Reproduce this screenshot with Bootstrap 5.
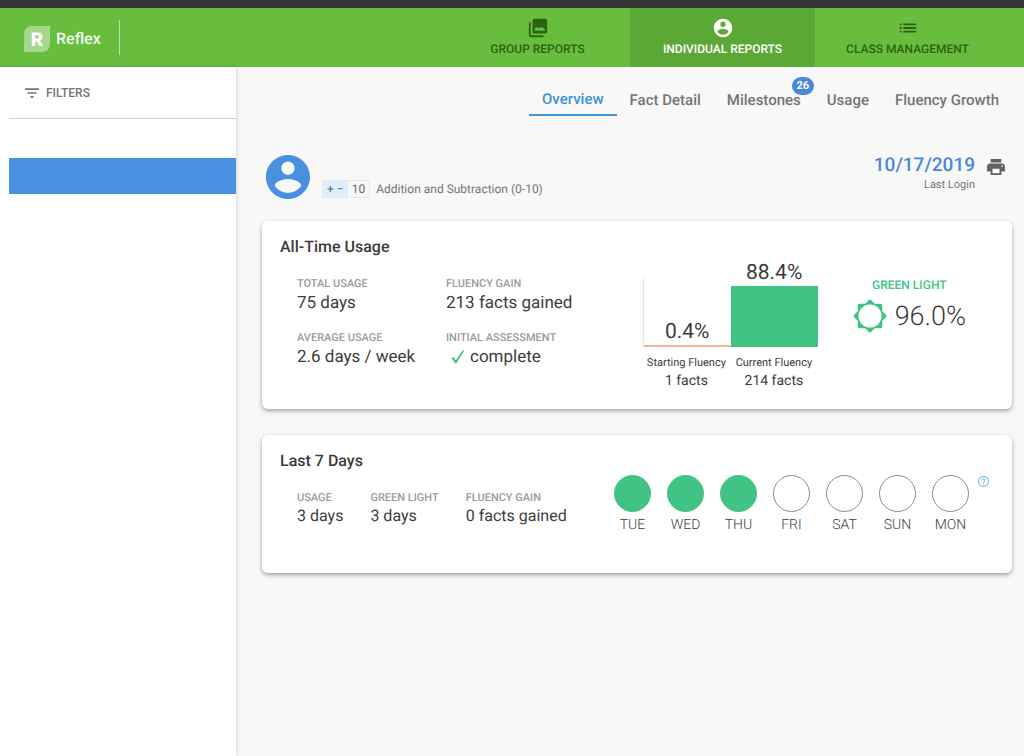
<!DOCTYPE html>
<html lang="en">
<head>
<meta charset="utf-8">
<meta name="viewport" content="width=device-width, initial-scale=1">
<title>Reflex – Individual Reports</title>
<link href="https://cdn.jsdelivr.net/npm/bootstrap@5.3.0/dist/css/bootstrap.min.css" rel="stylesheet">
<style>
  :root { --rx-green: #68bd3f; --rx-green-active: #5ca836; --rx-blue: #4a90e0; --rx-link: #3d94d6; --rx-mint: #41c383; }
  body { font-family: Roboto, "Liberation Sans", sans-serif; background: #f8f8f8; color: #3c3c3c; text-rendering: geometricPrecision; }
  svg { display: block; flex: none; fill: currentColor; }
  .top-strip { height: 8px; background: #353435; }
  .app-bar { height: 59px; background: var(--rx-green); padding: 0 24px; }
  .brand-link { color: #f1faec; font-size: 16px; line-height: 24px; font-weight: 500; gap: 6px; padding-top: 2px; }
  .brand-rule { width: 1px; height: 35px; margin-left: 18px; background: #b9e2a5; }
  .app-tab { width: 185px; gap: 2px; padding-top: 9px; font-size: 12px; line-height: 16px; font-weight: 500; color: #2c6310; text-decoration: none; }
  .app-tab.active { background: var(--rx-green-active); color: #fff; }
  .side-panel { width: 236px; flex: none; background: #fff; padding-left: 9px; box-shadow: 0 0 4px rgba(0,0,0,.2); }
  .filters-btn { height: 52px; padding: 0 0 0 16px; border: 0; border-bottom: 1px solid #cfcfcf; border-radius: 0; background: none; color: #757575; font-size: 12px; font-weight: 500; gap: 7px; }
  .student-btn { height: 36px; margin-top: 39px; border: 0; background: var(--rx-blue); }
  .main-pane { padding: 0 12px 24px 26px; }
  .sub-tabs { padding-top: 16px; }
  .sub-tabs a { padding: 0 13px; height: 33px; line-height: 34px; font-size: 15px; font-weight: 500; color: #757575; text-decoration: none; }
  .sub-tabs a.active { color: var(--rx-link); border-bottom: 2px solid var(--rx-link); line-height: 32px; }
  .count-pill { top: -6px; right: 0; min-width: 22px; height: 18px; border-radius: 9px; background: #4788d8; color: #fff; font-size: 11px; line-height: 18px; font-weight: 700; }
  .student-row { margin: 39px 0 22px 4px; }
  .op-tag { height: 16px; font-size: 12px; line-height: 16px; border: 1px solid #e6e9ee; color: #666; box-sizing: content-box; }
  .op-tag .ops { background: #deeefd; padding: 0 4px; }
  .op-tag .lim { padding: 0 4px; }
  .muted { color: #757575; font-size: 12px; line-height: 16px; }
  .skill { padding-bottom: 1px; }
  .course { margin-left: 6px; }
  .login { margin-right: 12px; }
  .login-date { color: #4788d8; font-size: 19px; line-height: 20px; font-weight: 500; }
  .login .muted { font-size: 11px; line-height: 20px; }
  .print-btn { margin: 4px 7px 0 0; }
  .panel-card { background: #fff; border: 0; border-radius: 6px; box-shadow: 0 2px 4px rgba(0,0,0,.35); padding: 14px 18px 0 18px; }
  .panel-card + .panel-card { margin-top: 26px; }
  .panel-card h2 { font-size: 16px; line-height: 24px; font-weight: 500; margin: 0 0 17px; }
  .stats { padding-left: 17px; }
  .stats dt { font-size: 11px; line-height: 16px; font-weight: 500; color: #9b9b9b; }
  .stats dd { font-size: 17px; line-height: 22px; margin: 0; }
  .stats-grid { display: grid; grid-template-columns: 149px auto; row-gap: 16px; }
  .stats-week { gap: 27px; }
  .stats-week dd { font-size: 16px; line-height: 20px; }
  .chart { width: 175px; margin: 43px 35px 18px 0; }
  .plot { height: 69px; border-left: 1px solid #e4e4e4; }
  .pct { font-size: 21px; line-height: 26px; flex: none; }
  .bar { flex: none; width: 100%; }
  .bar-start { background: #f3b698; min-height: 2px; }
  .bar-now { background: var(--rx-mint); }
  .axis { font-size: 11px; line-height: 16px; padding-top: 8px; }
  .axis strong { display: block; font-size: 14px; line-height: 20px; font-weight: 400; }
  .green-light { margin: 42px 28px 0 0; }
  .gl-label { color: var(--rx-mint); font-size: 12px; line-height: 16px; font-weight: 500; }
  .gl-row { margin-top: 6px; gap: 8px; }
  .gl-value { font-size: 27px; line-height: 34px; font-weight: 300; }
  .day-row { margin: 26px 5px 38px 0; gap: 9px; }
  .days { gap: 16px; }
  .day { width: 37px; font-size: 14px; line-height: 20px; font-weight: 300; gap: 3px; }
  .dot { width: 37px; height: 37px; border: 1px solid #8c8c8c; border-radius: 50%; }
  .dot.on { background: var(--rx-mint); border-color: var(--rx-mint); }
  .help-btn { color: #56ade3; margin-top: 1px; }
</style>
</head>
<body class="d-flex flex-column min-vh-100">
<div class="top-strip"></div>
<header class="app-bar d-flex align-items-stretch">
  <a href="#" class="brand-link d-flex align-items-center text-decoration-none">
    <svg width="26" height="26" viewBox="0 0 26 26"><path fill="#a5d78c" d="M8 0h18v18a8 8 0 0 1-8 8H0V8a8 8 0 0 1 8-8z"/><text x="13" y="20" text-anchor="middle" font-family="Roboto" font-weight="900" font-size="19" fill="#fff">R</text></svg>
    <span>Reflex</span>
  </a>
  <div class="brand-rule align-self-center"></div>
  <nav class="d-flex ms-auto">
    <a href="#" class="app-tab d-flex flex-column align-items-center">
      <svg width="22" height="22" viewBox="0 0 24 24"><path fill-rule="evenodd" d="M22 16V4a2 2 0 0 0-2-2H8a2 2 0 0 0-2 2v12a2 2 0 0 0 2 2h12a2 2 0 0 0 2-2zM8.500 15v-2.500l2.500-1.500 2 1.500 2.500-1.500 4 2v2zM2 6v14a2 2 0 0 0 2 2h14v-2H4V6z"/></svg>
      GROUP REPORTS</a>
    <a href="#" class="app-tab active d-flex flex-column align-items-center" aria-current="page">
      <svg width="22" height="22" viewBox="0 0 24 24"><path d="M12 2C6.480 2 2 6.480 2 12s4.480 10 10 10 10-4.480 10-10S17.520 2 12 2zm0 3c1.660 0 3 1.340 3 3s-1.340 3-3 3-3-1.340-3-3 1.340-3 3-3zm0 14.200c-2.500 0-4.710-1.280-6-3.220.030-1.990 4-3.080 6-3.080 1.990 0 5.970 1.090 6 3.080-1.290 1.940-3.500 3.220-6 3.220z"/></svg>
      INDIVIDUAL REPORTS</a>
    <a href="#" class="app-tab d-flex flex-column align-items-center">
      <svg width="22" height="22" viewBox="0 0 24 24"><path d="M3 13h2v-2H3v2zm0 4h2v-2H3v2zm0-8h2V7H3v2zm4 4h14v-2H7v2zm0 4h14v-2H7v2zM7 7v2h14V7H7z"/></svg>
      CLASS MANAGEMENT</a>
  </nav>
</header>

<div class="d-flex flex-grow-1">
  <aside class="side-panel">
    <button type="button" class="filters-btn d-flex align-items-center w-100">
      <svg width="14" height="10" viewBox="3 6 18 12"><path d="M10 18h4v-2h-4v2zM3 6v2h18V6H3zm3 7h12v-2H6v2z"/></svg>
      FILTERS</button>
    <button type="button" class="student-btn d-block w-100" aria-label="Selected student"></button>
  </aside>

  <main class="main-pane flex-grow-1">
    <nav class="sub-tabs d-flex justify-content-end">
      <a href="#" class="active" aria-current="page">Overview</a>
      <a href="#">Fact Detail</a>
      <a href="#" class="position-relative">Milestones<span class="count-pill position-absolute text-center">26</span></a>
      <a href="#">Usage</a>
      <a href="#">Fluency Growth</a>
    </nav>

    <div class="student-row d-flex align-items-start">
      <svg width="44" height="44" viewBox="2 2 20 20" color="#4a90e0"><path d="M12 2C6.480 2 2 6.480 2 12s4.480 10 10 10 10-4.480 10-10S17.520 2 12 2zm0 3c1.660 0 3 1.340 3 3s-1.340 3-3 3-3-1.340-3-3 1.340-3 3-3zm0 14.200c-2.500 0-4.710-1.280-6-3.220.030-1.990 4-3.080 6-3.080 1.990 0 5.970 1.090 6 3.080-1.290 1.940-3.500 3.220-6 3.220z"/></svg>
      <div class="skill d-flex align-items-center align-self-end ms-2 ps-1">
        <span class="op-tag d-flex"><span class="ops">+ −</span><span class="lim">10</span></span>
        <span class="muted course">Addition and Subtraction (0-10)</span>
      </div>
      <div class="d-flex align-items-start ms-auto">
        <div class="login text-end">
          <div class="login-date">10/17/2019</div>
          <div class="muted">Last Login</div>
        </div>
        <button type="button" class="print-btn btn p-0 border-0" aria-label="Print">
          <svg width="18" height="16" viewBox="2 3 20 18" color="#616161"><path d="M19 8H5c-1.660 0-3 1.340-3 3v6h4v4h12v-4h4v-6c0-1.660-1.340-3-3-3zm-3 11H8v-5h8v5zm3-7c-.550 0-1-.450-1-1s.450-1 1-1 1 .450 1 1-.450 1-1 1zm-1-9H6v4h12V3z"/></svg>
        </button>
      </div>
    </div>

    <section class="panel-card d-flex">
      <div>
        <h2>All-Time Usage</h2>
        <dl class="stats stats-grid mb-0">
          <div><dt>TOTAL USAGE</dt><dd>75 days</dd></div>
          <div><dt>FLUENCY GAIN</dt><dd>213 facts gained</dd></div>
          <div><dt>AVERAGE USAGE</dt><dd>2.6 days / week</dd></div>
          <div><dt>INITIAL ASSESSMENT</dt><dd class="d-flex align-items-center gap-1 ps-1"><svg width="16" height="16" viewBox="0 0 16 16" color="#41c383"><path d="M1.500 9.200 3.400 8l2.400 3.300L12.600 1.500 14.400 1.200 6.400 14.300H5.200z"/></svg>complete</dd></div>
        </dl>
      </div>
      <div class="chart ms-auto">
        <div class="plot d-flex">
          <div class="w-50 d-flex flex-column justify-content-end align-items-center"><span class="pct">0.4%</span><div class="bar bar-start" style="height:0.4%"></div></div>
          <div class="w-50 d-flex flex-column justify-content-end align-items-center"><span class="pct">88.4%</span><div class="bar bar-now" style="height:88.4%"></div></div>
        </div>
        <div class="axis d-flex text-center text-nowrap">
          <div class="w-50">Starting Fluency<strong>1 facts</strong></div>
          <div class="w-50">Current Fluency<strong>214 facts</strong></div>
        </div>
      </div>
      <div class="green-light text-center">
        <div class="gl-label">GREEN LIGHT</div>
        <div class="gl-row d-flex align-items-center">
          <svg width="34" height="34" viewBox="0 0 34 34" color="#41c383"><path fill="currentColor" stroke="currentColor" stroke-width="3" stroke-linejoin="round" d="M17 2l4.300 4.200h6.500v6.500L32 17l-4.200 4.300v6.500h-6.500L17 32l-4.300-4.200H6.200v-6.500L2 17l4.200-4.300V6.200h6.500z"/><circle cx="17" cy="17" r="11.500" fill="#fff"/></svg>
          <span class="gl-value">96.0%</span>
        </div>
      </div>
    </section>

    <section class="panel-card d-flex">
      <div>
        <h2>Last 7 Days</h2>
        <dl class="stats stats-week d-flex mb-0">
          <div><dt>USAGE</dt><dd>3 days</dd></div>
          <div><dt>GREEN LIGHT</dt><dd>3 days</dd></div>
          <div><dt>FLUENCY GAIN</dt><dd>0 facts gained</dd></div>
        </dl>
      </div>
      <div class="day-row d-flex align-items-start ms-auto">
        <div class="days d-flex">
          <div class="day d-flex flex-column align-items-center"><span class="dot on"></span>TUE</div>
          <div class="day d-flex flex-column align-items-center"><span class="dot on"></span>WED</div>
          <div class="day d-flex flex-column align-items-center"><span class="dot on"></span>THU</div>
          <div class="day d-flex flex-column align-items-center"><span class="dot"></span>FRI</div>
          <div class="day d-flex flex-column align-items-center"><span class="dot"></span>SAT</div>
          <div class="day d-flex flex-column align-items-center"><span class="dot"></span>SUN</div>
          <div class="day d-flex flex-column align-items-center"><span class="dot"></span>MON</div>
        </div>
        <button type="button" class="help-btn btn p-0 border-0" aria-label="Help"><svg width="11" height="11" viewBox="0 0 11 11"><g fill="none" stroke="#56ade3"><circle cx="5.500" cy="5.500" r="5"/><path d="M4 4.300a1.500 1.500 0 1 1 2.300 1.200q-.8.500-.8 1.200M5.500 7.600v1"/></g></svg></button>
      </div>
    </section>
  </main>
</div>
<script src="https://cdn.jsdelivr.net/npm/bootstrap@5.3.0/dist/js/bootstrap.bundle.min.js"></script>
</body>
</html>
